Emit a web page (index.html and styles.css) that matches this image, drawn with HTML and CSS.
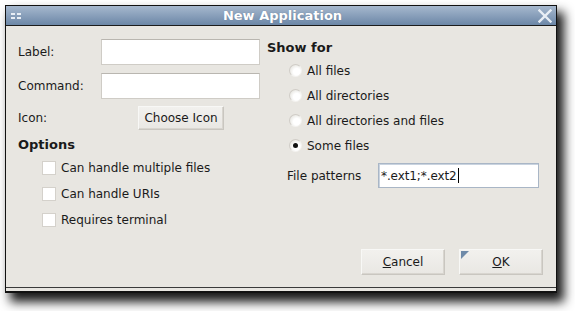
FILE: index.html
```html
<!DOCTYPE html>
<html>
<head>
<meta charset="utf-8">
<link rel="stylesheet" href="styles.css">
</head>
<body>
<div class="window">
  <div class="titlebar">
    <div class="menu-icon"><span></span><span></span><span></span><span></span></div>
    <div class="title">New Application</div>
    <svg class="close" width="14" height="14" viewBox="0 0 14 14"><path d="M1.5 1.5 L12.5 12.5 M12.5 1.5 L1.5 12.5" stroke="#e8eef5" stroke-width="2.4" stroke-linecap="square"/></svg>
  </div>
  <div class="content">
    <div class="columns">
      <div class="left">
        <div class="field-row">
          <span class="label">Label:</span>
          <div class="entry"></div>
        </div>
        <div class="field-row">
          <span class="label">Command:</span>
          <div class="entry"></div>
        </div>
        <div class="icon-row">
          <span class="label">Icon:</span>
          <div class="btn choose">Choose Icon</div>
        </div>
        <div class="heading">Options</div>
        <div class="check-row"><span class="checkbox"></span><span>Can handle multiple files</span></div>
        <div class="check-row"><span class="checkbox"></span><span>Can handle URIs</span></div>
        <div class="check-row"><span class="checkbox"></span><span>Requires terminal</span></div>
      </div>
      <div class="right">
        <div class="heading show">Show for</div>
        <div class="radio-row"><span class="radio"></span><span>All files</span></div>
        <div class="radio-row"><span class="radio"></span><span>All directories</span></div>
        <div class="radio-row"><span class="radio"></span><span>All directories and files</span></div>
        <div class="radio-row"><span class="radio checked"></span><span>Some files</span></div>
        <div class="pattern-row">
          <span class="plabel">File patterns</span>
          <div class="entry focused"><span class="ptext">*.ext1;*.ext2</span><span class="cursor"></span></div>
        </div>
      </div>
    </div>
    <div class="buttons">
      <div class="btn action"><span class="u">C</span>ancel</div>
      <div class="btn action default"><span class="corner"></span><span class="u">O</span>K</div>
    </div>
  </div>
  <div class="bottom-strip"></div>
</div>
</body>
</html>
```
FILE: styles.css
```css
html, body {
  margin: 0;
  padding: 0;
  background: #ffffff;
}
body {
  font-family: "DejaVu Sans", sans-serif;
  font-size: 12px;
  color: #1a1a1a;
  height: 311px;
}
.window {
  margin: 5px 0 0 5px;
  width: 550px;
  height: 286px;
  border: 1px solid #111;
  background: #e8e6e1;
  box-shadow: 6px 8px 10px 1px rgba(0,0,0,0.9);
  display: flex;
  flex-direction: column;
}
.titlebar {
  height: 19px;
  border-bottom: 1px solid #1c1c1c;
  background: linear-gradient(#a6b8ce, #6c87a7);
  display: flex;
  align-items: center;
  position: relative;
}
.menu-icon {
  width: 10px;
  margin-left: 5px;
  display: grid;
  grid-template-columns: 4px 4px;
  column-gap: 2px;
  row-gap: 2px;
}
.menu-icon span {
  height: 2px;
  background: #e8eef5;
}
.title {
  flex: 1;
  text-align: center;
  color: #ffffff;
  font-weight: bold;
  font-size: 13px;
  padding-left: 6px;
  text-shadow: 0 0 1px rgba(40,60,90,0.4);
}
.close {
  margin-right: 4px;
}
.content {
  flex: 1;
  display: flex;
  flex-direction: column;
  padding: 13px 13px 0 12px;
  border-bottom: 1px solid #3a3a3a;
}
.columns {
  display: flex;
}
.left {
  width: 249px;
  display: flex;
  flex-direction: column;
}
.field-row {
  display: flex;
  align-items: center;
  height: 26px;
  margin-bottom: 8px;
}
.field-row .label {
  width: 83px;
}
.entry {
  width: 157px;
  height: 24px;
  background: #ffffff;
  border: 1px solid #cfccc6;
  border-top-color: #b9b6b0;
  display: flex;
  align-items: center;
}
.icon-row {
  display: flex;
  align-items: center;
  height: 24px;
  margin-top: -1px;
}
.icon-row .label {
  width: 120px;
}
.btn {
  background: linear-gradient(#f2f1ee, #e9e7e3);
  border: 1px solid #c9c6c0;
  border-top-color: #f8f8f6;
  border-left-color: #f8f8f6;
  box-shadow: inset -1px -1px 0 #d8d5cf;
  display: flex;
  align-items: center;
  justify-content: center;
}
.choose {
  width: 84px;
  height: 22px;
}
.heading {
  font-weight: bold;
  font-size: 13px;
  height: 16px;
  line-height: 16px;
  margin-top: 7px;
  margin-left: 0;
}
.check-row {
  display: flex;
  align-items: center;
  height: 26px;
  padding-left: 24px;
}
.left .heading + .check-row {
  margin-top: 2px;
}
.checkbox {
  width: 12px;
  height: 12px;
  background: #ffffff;
  border: 1px solid #d4d1cb;
  margin-right: 5px;
}
.right {
  display: flex;
  flex-direction: column;
}
.heading.show {
  margin-top: 1px;
  height: 18px;
  line-height: 15px;
}
.radio-row {
  display: flex;
  align-items: center;
  height: 25px;
  padding-left: 22px;
}
.radio {
  width: 13px;
  height: 13px;
  border-radius: 50%;
  background: radial-gradient(circle at 62% 62%, #ffffff 35%, #ecebe7 70%, #d8d6d0 100%);
  border: 1px solid #d0cdc7;
  border-bottom-color: #f4f3f0;
  border-right-color: #f4f3f0;
  box-sizing: border-box;
  margin-right: 5px;
  position: relative;
}
.radio.checked::after {
  content: "";
  position: absolute;
  left: 3px;
  top: 3px;
  width: 5px;
  height: 5px;
  border-radius: 50%;
  background: #111;
}
.pattern-row {
  display: flex;
  align-items: center;
  height: 25px;
  margin-top: 5px;
  padding-left: 20px;
}
.plabel {
  width: 91px;
}
.entry.focused {
  width: 157px;
  height: 23px;
  border: 1px solid #a9b6c6;
  box-shadow: inset 1px 1px 0 #c9d3df;
  padding-left: 2px;
}
.ptext {
  letter-spacing: -0.1px;
}
.cursor {
  display: inline-block;
  width: 1px;
  height: 15px;
  background: #000;
  margin-left: 1px;
}
.buttons {
  margin-top: auto;
  margin-bottom: 12px;
  display: flex;
  justify-content: flex-end;
  gap: 14px;
}
.btn.action {
  width: 82px;
  height: 24px;
  position: relative;
}
.u {
  text-decoration: underline;
}
.corner {
  position: absolute;
  left: 1px;
  top: 1px;
  width: 0;
  height: 0;
  border-top: 8px solid #6f8aa8;
  border-right: 8px solid transparent;
}
.bottom-strip {
  height: 3px;
  background: #e8e6e1;
  border-bottom: 1px solid #111;
}
```
